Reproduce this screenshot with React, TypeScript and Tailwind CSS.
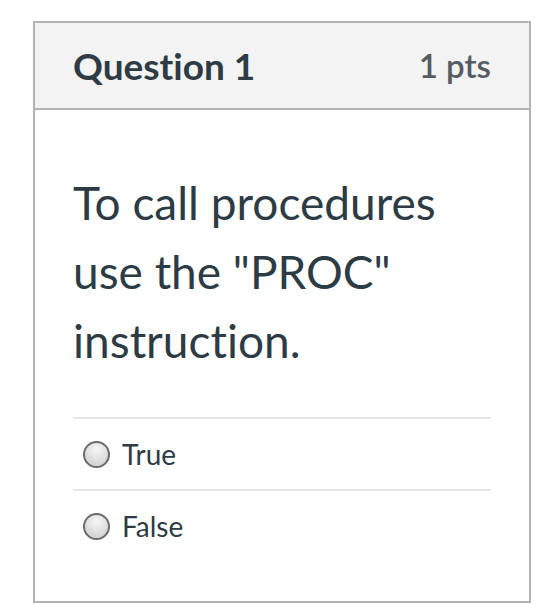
import React from 'react';

const answers = ['True', 'False'];

const Radio = () => (
  <span className="inline-block w-[27px] h-[27px] rounded-full border-2 border-[#6b6b6b] bg-[radial-gradient(circle_at_50%_30%,#f7f7f7,#c9c9c9)] shrink-0" />
);

export default function App() {
  return (
    <div className="w-[556px] h-[604px] bg-white pt-[21px] pl-[33px] [font-variant-ligatures:none]" style={{ fontFamily: 'Lato, "Open Sans", sans-serif' }}>
      <div className="w-[498px] h-[582px] border-2 border-[#b3b3b3] flex flex-col">
        {/* Header */}
        <div className="h-[87px] shrink-0 bg-[#f3f3f3] border-b-2 border-[#b3b3b3] flex items-center justify-between px-[38px]">
          <span className="text-[37px] font-bold text-[#2d3b45]">Question 1</span>
          <span className="text-[33px] font-semibold text-[#555b60]">1 pts</span>
        </div>

        {/* Body */}
        <div className="px-[38px] pt-[58px]">
          <p className="text-[46px] leading-[69px] text-[#2d3b45] pr-10">
            To call procedures use the "PROC" instruction.
          </p>
          <div className="mt-[42px]">
            {answers.map((a) => (
              <div key={a} className="h-[72px] border-t-2 border-[#e6e6e6] flex items-center gap-[12px] pl-[10px]">
                <Radio />
                <span className="text-[28px] text-[#2d3b45]">{a}</span>
              </div>
            ))}
          </div>
        </div>
      </div>
    </div>
  );
}
